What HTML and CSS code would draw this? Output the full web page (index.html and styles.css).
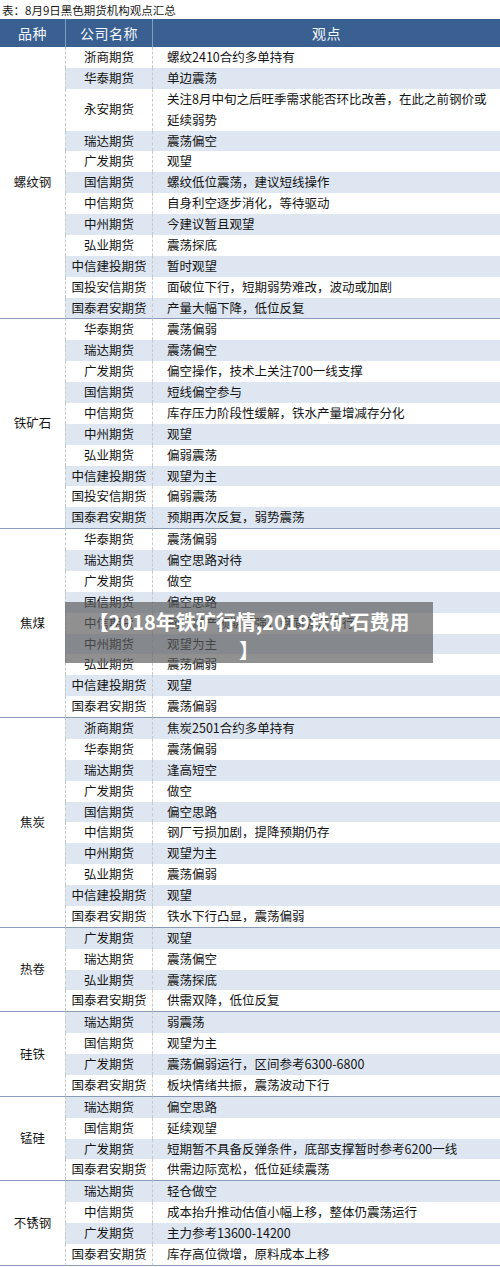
FILE: index.html
```html
<!DOCTYPE html>
<html lang="zh-CN">
<head>
<meta charset="utf-8">
<title>8月9日黑色期货机构观点汇总</title>
<link rel="stylesheet" href="styles.css">
</head>
<body>
<div class="page">
  <div class="caption">表：8月9日黑色期货机构观点汇总</div>
  <table class="tbl">
    <colgroup><col class="c1"><col class="c2"><col class="c3"></colgroup>
    <thead>
      <tr><th>品种</th><th class="mid">公司名称</th><th>观点</th></tr>
    </thead>
    <tbody>
      <tr><td class="cat" rowspan="12">螺纹钢</td><td class="co">浙商期货</td><td class="vw">螺纹2410合约多单持有</td></tr>
      <tr><td class="co">华泰期货</td><td class="vw">单边震荡</td></tr>
      <tr><td class="co">永安期货</td><td class="vw"><span class="wrap">关注8月中旬之后旺季需求能否环比改善，在此之前钢价或延续弱势</span></td></tr>
      <tr><td class="co">瑞达期货</td><td class="vw">震荡偏空</td></tr>
      <tr><td class="co">广发期货</td><td class="vw">观望</td></tr>
      <tr><td class="co">国信期货</td><td class="vw">螺纹低位震荡，建议短线操作</td></tr>
      <tr><td class="co">中信期货</td><td class="vw">自身利空逐步消化，等待驱动</td></tr>
      <tr><td class="co">中州期货</td><td class="vw">今建议暂且观望</td></tr>
      <tr><td class="co">弘业期货</td><td class="vw">震荡探底</td></tr>
      <tr><td class="co">中信建投期货</td><td class="vw">暂时观望</td></tr>
      <tr><td class="co">国投安信期货</td><td class="vw">面破位下行，短期弱势难改，波动或加剧</td></tr>
      <tr><td class="co">国泰君安期货</td><td class="vw">产量大幅下降，低位反复</td></tr>

      <tr class="g"><td class="cat" rowspan="10">铁矿石</td><td class="co">华泰期货</td><td class="vw">震荡偏弱</td></tr>
      <tr><td class="co">瑞达期货</td><td class="vw">震荡偏空</td></tr>
      <tr><td class="co">广发期货</td><td class="vw">偏空操作，技术上关注700一线支撑</td></tr>
      <tr><td class="co">国信期货</td><td class="vw">短线偏空参与</td></tr>
      <tr><td class="co">中信期货</td><td class="vw">库存压力阶段性缓解，铁水产量增减存分化</td></tr>
      <tr><td class="co">中州期货</td><td class="vw">观望</td></tr>
      <tr><td class="co">弘业期货</td><td class="vw">偏弱震荡</td></tr>
      <tr><td class="co">中信建投期货</td><td class="vw">观望为主</td></tr>
      <tr><td class="co">国投安信期货</td><td class="vw">偏弱震荡</td></tr>
      <tr><td class="co">国泰君安期货</td><td class="vw">预期再次反复，弱势震荡</td></tr>

      <tr class="g"><td class="cat" rowspan="9">焦煤</td><td class="co">华泰期货</td><td class="vw">震荡偏弱</td></tr>
      <tr><td class="co">瑞达期货</td><td class="vw">偏空思路对待</td></tr>
      <tr><td class="co">广发期货</td><td class="vw">做空</td></tr>
      <tr><td class="co">国信期货</td><td class="vw">偏空思路</td></tr>
      <tr><td class="co">中信期货</td><td class="vw">钢厂减产预期增强，盘面震荡下行</td></tr>
      <tr><td class="co">中州期货</td><td class="vw">观望为主</td></tr>
      <tr><td class="co">弘业期货</td><td class="vw">震荡偏弱</td></tr>
      <tr><td class="co">中信建投期货</td><td class="vw">观望</td></tr>
      <tr><td class="co">国泰君安期货</td><td class="vw">震荡偏弱</td></tr>

      <tr class="g"><td class="cat" rowspan="10">焦炭</td><td class="co">浙商期货</td><td class="vw">焦炭2501合约多单持有</td></tr>
      <tr><td class="co">华泰期货</td><td class="vw">震荡偏弱</td></tr>
      <tr><td class="co">瑞达期货</td><td class="vw">逢高短空</td></tr>
      <tr><td class="co">广发期货</td><td class="vw">做空</td></tr>
      <tr><td class="co">国信期货</td><td class="vw">偏空思路</td></tr>
      <tr><td class="co">中信期货</td><td class="vw">钢厂亏损加剧，提降预期仍存</td></tr>
      <tr><td class="co">中州期货</td><td class="vw">观望为主</td></tr>
      <tr><td class="co">弘业期货</td><td class="vw">震荡偏弱</td></tr>
      <tr><td class="co">中信建投期货</td><td class="vw">观望</td></tr>
      <tr><td class="co">国泰君安期货</td><td class="vw">铁水下行凸显，震荡偏弱</td></tr>

      <tr class="g"><td class="cat" rowspan="4">热卷</td><td class="co">广发期货</td><td class="vw">观望</td></tr>
      <tr><td class="co">瑞达期货</td><td class="vw">震荡偏空</td></tr>
      <tr><td class="co">弘业期货</td><td class="vw">震荡探底</td></tr>
      <tr><td class="co">国泰君安期货</td><td class="vw">供需双降，低位反复</td></tr>

      <tr class="g"><td class="cat" rowspan="4">硅铁</td><td class="co">瑞达期货</td><td class="vw">弱震荡</td></tr>
      <tr><td class="co">国信期货</td><td class="vw">观望为主</td></tr>
      <tr><td class="co">广发期货</td><td class="vw">震荡偏弱运行，区间参考6300-6800</td></tr>
      <tr><td class="co">国泰君安期货</td><td class="vw">板块情绪共振，震荡波动下行</td></tr>

      <tr class="g"><td class="cat" rowspan="4">锰硅</td><td class="co">瑞达期货</td><td class="vw">偏空思路</td></tr>
      <tr><td class="co">国信期货</td><td class="vw">延续观望</td></tr>
      <tr><td class="co">广发期货</td><td class="vw">短期暂不具备反弹条件，底部支撑暂时参考6200一线</td></tr>
      <tr><td class="co">国泰君安期货</td><td class="vw">供需边际宽松，低位延续震荡</td></tr>

      <tr class="g"><td class="cat last" rowspan="4">不锈钢</td><td class="co">瑞达期货</td><td class="vw">轻仓做空</td></tr>
      <tr><td class="co">中信期货</td><td class="vw">成本抬升推动估值小幅上移，整体仍震荡运行</td></tr>
      <tr><td class="co">广发期货</td><td class="vw">主力参考13600-14200</td></tr>
      <tr class="end"><td class="co">国泰君安期货</td><td class="vw">库存高位微增，原料成本上移</td></tr>
    </tbody>
  </table>
  <div class="banner"><span class="banner-line">【2018年铁矿行情,2019铁矿石费用</span><br>】</div>
</div>
</body>
</html>
```
FILE: styles.css
```css
html, body {
  margin: 0;
  padding: 0;
  background: #ffffff;
}
body {
  font-family: "Noto Sans CJK SC", "Noto Sans", "DejaVu Sans", sans-serif;
  color: #141414;
}
.page {
  position: relative;
  width: 500px;
}
.caption {
  font-size: 11.5px;
  line-height: 17px;
  padding: 2px 0 0 2px;
  height: 17px;
  color: #1a1a1a;
}
.tbl {
  width: 500px;
  border-collapse: separate;
  border-spacing: 0;
  table-layout: fixed;
}
.c1 { width: 65px; }
.c2 { width: 88px; }
.c3 { width: 347px; }
.tbl th {
  background: #3a6091;
  color: #f4f7fb;
  font-weight: normal;
  font-size: 14px;
  height: 28px;
  padding: 0;
  text-align: center;
  vertical-align: middle;
  letter-spacing: 0.5px;
}
.tbl th.mid {
  border-left: 1px solid #7f9cc2;
  border-right: 1px solid #7f9cc2;
}
.tbl td {
  font-size: 12.5px;
  line-height: 20.88px;
  padding: 0;
  vertical-align: middle;
  background: #ffffff;
}
.tbl tbody tr:nth-child(even) td {
  background: #dde6f1;
}
.tbl tbody tr td.cat {
  background: #ffffff;
  text-align: center;
  font-size: 12.5px;
}
.tbl td.co {
  text-align: center;
  border-left: 1px dashed #c6c9cd;
  border-right: 1px dashed #c6c9cd;
  white-space: nowrap;
}
.tbl td.vw {
  padding-left: 14px;
  padding-right: 6px;
}
.wrap {
  display: block;
  width: 326px;
}
.tbl tr.g td {
  border-top: 1px solid #8a9cb6;
}
.tbl tr.end td,
.tbl td.last {
  border-bottom: 1px solid #8a9cb6;
}
.banner {
  position: absolute;
  left: 65px;
  top: 602px;
  width: 368px;
  height: 61px;
  box-sizing: border-box;
  padding-top: 6px;
  background: rgba(92, 92, 92, 0.68);
  color: #ffffff;
  font-weight: bold;
  font-size: 20px;
  line-height: 28px;
  text-align: center;
}
.banner-line {
  white-space: nowrap;
}
```
